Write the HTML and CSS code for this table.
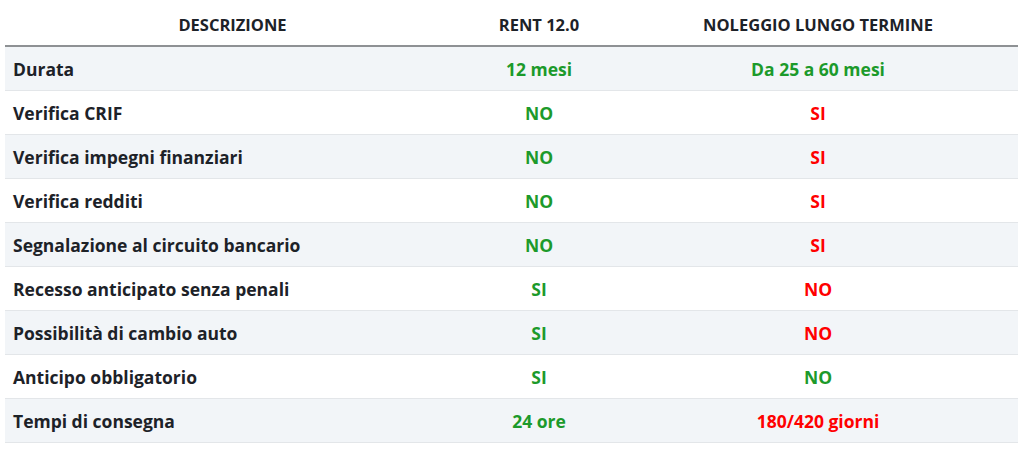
FILE: index.html
```html
<!DOCTYPE html>
<html lang="it">
<head>
<meta charset="utf-8">
<link rel="stylesheet" href="styles.css">
</head>
<body>
<table class="cmp">
  <colgroup>
    <col class="c1"><col class="c2"><col class="c3">
  </colgroup>
  <thead>
    <tr><th>DESCRIZIONE</th><th>RENT 12.0</th><th>NOLEGGIO LUNGO TERMINE</th></tr>
  </thead>
  <tbody>
    <tr><td>Durata</td><td class="ok">12 mesi</td><td class="ok">Da 25 a 60 mesi</td></tr>
    <tr><td>Verifica CRIF</td><td class="ok">NO</td><td class="ko">SI</td></tr>
    <tr><td>Verifica impegni finanziari</td><td class="ok">NO</td><td class="ko">SI</td></tr>
    <tr><td>Verifica redditi</td><td class="ok">NO</td><td class="ko">SI</td></tr>
    <tr><td>Segnalazione al circuito bancario</td><td class="ok">NO</td><td class="ko">SI</td></tr>
    <tr><td>Recesso anticipato senza penali</td><td class="ok">SI</td><td class="ko">NO</td></tr>
    <tr><td>Possibilità di cambio auto</td><td class="ok">SI</td><td class="ko">NO</td></tr>
    <tr><td>Anticipo obbligatorio</td><td class="ok">SI</td><td class="ok">NO</td></tr>
    <tr><td>Tempi di consegna</td><td class="ok">24 ore</td><td class="ko">180/420 giorni</td></tr>
  </tbody>
</table>
</body>
</html>
```
FILE: styles.css
```css
html, body {
  margin: 0;
  padding: 0;
  background: #ffffff;
}
body {
  padding: 0 6px 0 5px;
  font-family: "Open Sans", "Liberation Sans", sans-serif;
  font-weight: 700;
  font-size: 17.5px;
  color: #1d2228;
}
.cmp {
  width: 1013px;
  border-collapse: collapse;
  table-layout: fixed;
}
.c1 { width: 455px; }
.c2 { width: 158px; }
.c3 { width: 400px; }
.cmp th {
  height: 41px;
  padding: 4px 8px 0;
  text-align: center;
  font-size: 16.5px;
  font-weight: 700;
  border-bottom: 2px solid #8e9194;
  vertical-align: middle;
}
.cmp td {
  height: 43px;
  padding: 0 8px;
  border-bottom: 1px solid #e3e6e9;
  vertical-align: middle;
}
.cmp td + td { text-align: center; }
.cmp tbody tr:nth-child(odd) td { background: #f2f5f8; }
.ok { color: #1c9a2b; }
.ko { color: #ff0000; }
```
